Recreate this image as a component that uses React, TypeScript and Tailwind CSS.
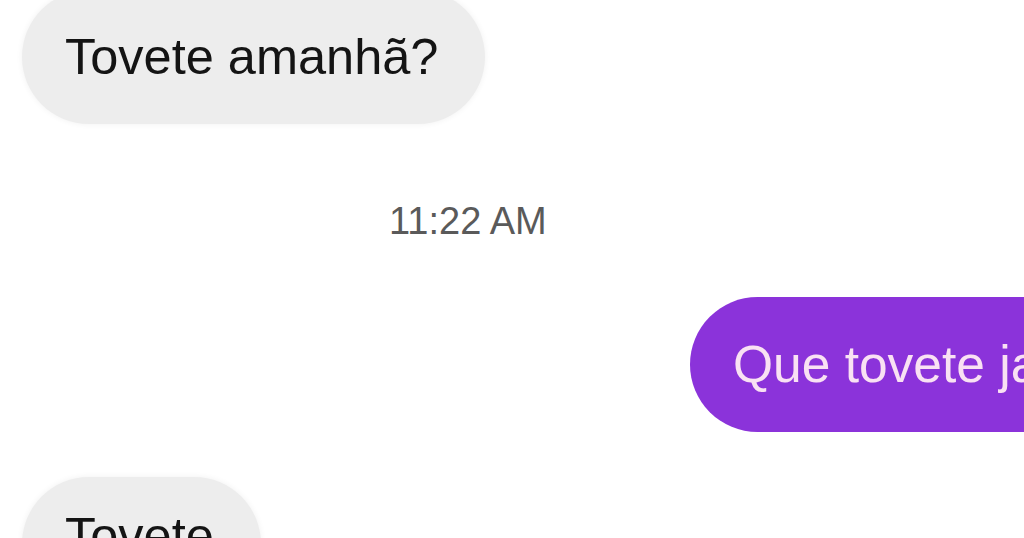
export default function App() {
  return (
    <div
      className="w-[1024px] h-[538px] overflow-hidden bg-white"
      style={{ fontFamily: '"Liberation Sans", Arial, sans-serif' }}
    >
      {/* incoming */}
      <div className="pl-[22px] -mt-[10px]">
        <div className="inline-flex h-[134px] items-center rounded-full bg-[#ededed] pl-[43px] pr-[47px] text-[50.5px] leading-none text-[#141414] shadow-[0_0_6px_rgba(0,0,0,0.06)]">
          Tovete amanhã?
        </div>
      </div>

      {/* timestamp */}
      <div className="mt-[78px] pl-[389px] text-[38px] leading-none text-[#5a5a5a]">11:22 AM</div>

      {/* outgoing */}
      <div className="mt-[57px] pl-[690px] whitespace-nowrap">
        <div className="inline-flex h-[135px] items-center rounded-l-full bg-[#8b33da] pl-[43px] pr-[60px] text-[51.5px] leading-none text-[#f9e1f3]">
          Que tovete ja?
        </div>
      </div>

      {/* incoming */}
      <div className="mt-[45px] pl-[22px]">
        <div className="inline-flex h-[134px] items-start rounded-full bg-[#ededed] pl-[43px] pr-[47px] pt-[34px] text-[50.5px] leading-none text-[#141414] shadow-[0_0_6px_rgba(0,0,0,0.06)]">
          Tovete
        </div>
      </div>
    </div>
  );
}
